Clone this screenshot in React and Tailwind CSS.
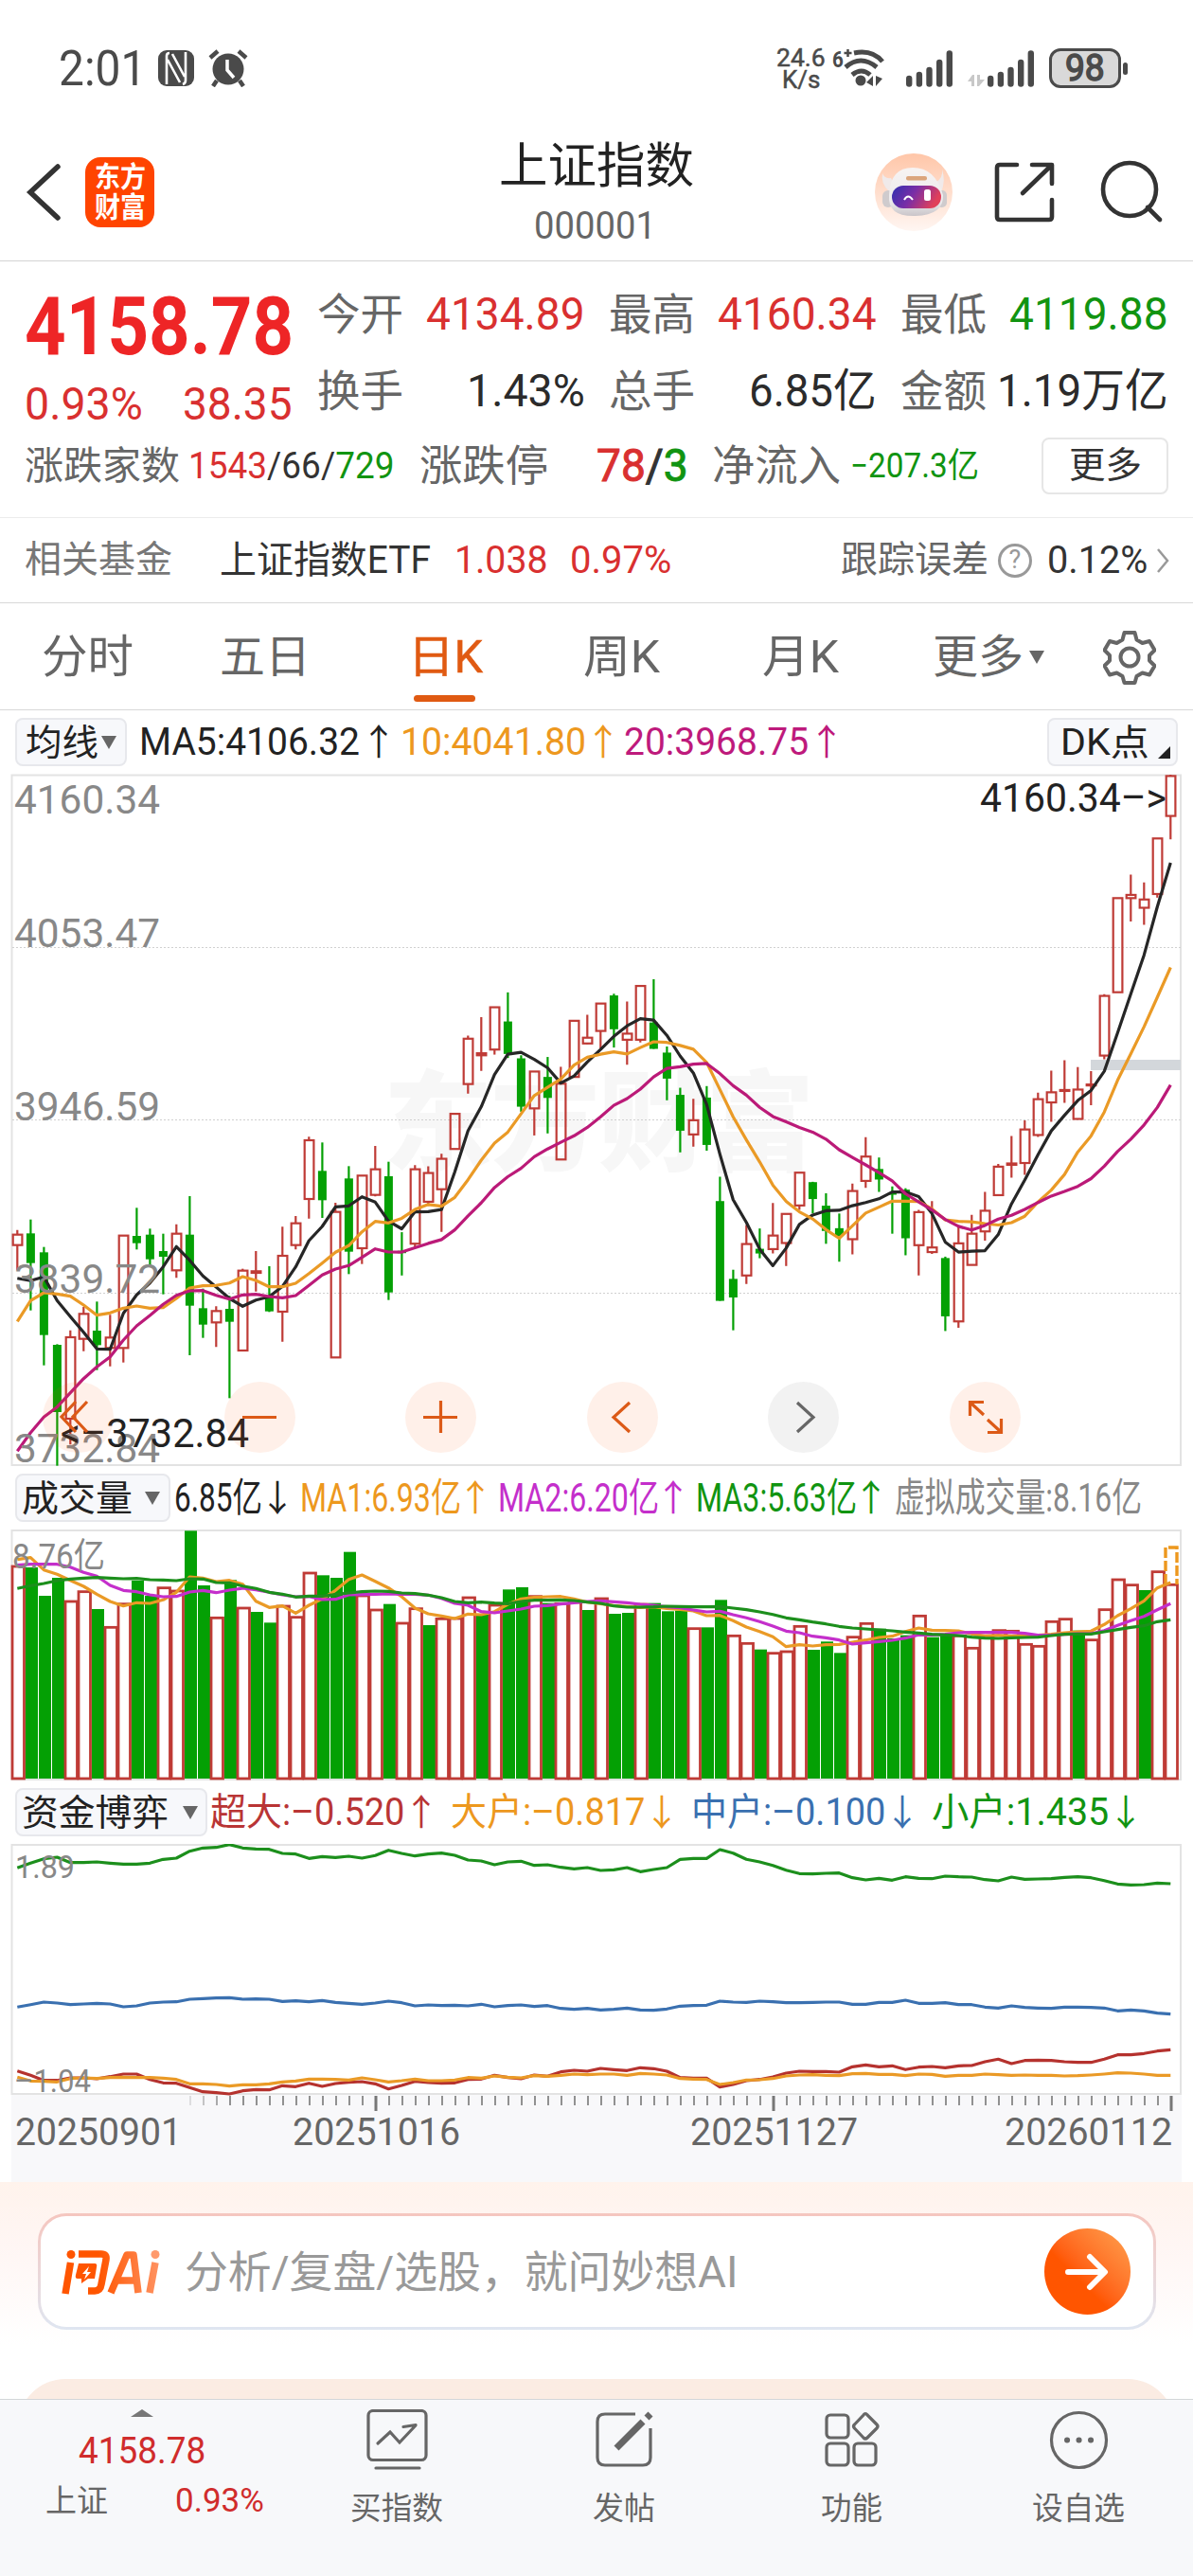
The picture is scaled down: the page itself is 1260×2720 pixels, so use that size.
import { useLayoutEffect, useRef, useState } from "react";
import clsx from "clsx";

// squeezes or stretches a single line of text to the width of its box
function Fit({ className, children }) {
  const boxRef = useRef(null);
  const textRef = useRef(null);
  const [scale, setScale] = useState(1);

  useLayoutEffect(() => {
    setScale(boxRef.current.clientWidth / textRef.current.offsetWidth);
  }, [children]);

  return (
    <span ref={boxRef} className={clsx("block shrink-0 leading-none", className)}>
      <span
        ref={textRef}
        className="inline-block origin-left whitespace-pre align-top"
        style={{ transform: `scaleX(${scale})` }}
      >
        {children}
      </span>
    </span>
  );
}

function Arrow({ down, className }) {
  return (
    <span className={clsx("block w-[40px] shrink-0 text-center text-[38px] leading-none", className)}>
      {down ? "↓" : "↑"}
    </span>
  );
}

function Caret({ className }) {
  return (
    <svg viewBox="0 0 16 14" className={clsx("h-[14px] w-4 shrink-0 fill-[#666]", className)}>
      <path d="M0 0h16L8 14z" />
    </svg>
  );
}

/* ---------- series ---------- */

const PAGES = [
  { from: 61, top: 800, unit: 2.063 },
  { from: 29, top: 1000, unit: 2.8 },
  { from: 0, top: 1040, unit: 3 },
];

const priceY = (v, i) => {
  const page = PAGES.find((p) => i >= p.from);
  return page.top + v / page.unit;
};
const volumeY = (v) => 1540 + v / 3;
const flowY = (v) => 1880 + v / 3;
const dayX = (i) => 18.3 + 14 * i;

const RED = "#bf3b36";
const GREEN = "#04a004";

// high, body top, body bottom, low
const candles = [
  [776, 791, 824, 904], [743, 787, 881, 1031], [830, 847, 1109, 1205], [1138, 1140, 1353, 1523],
  [1094, 1116, 1374, 1456], [1020, 1042, 1121, 1160], [1003, 1095, 1141, 1220], [1045, 1117, 1150, 1208],
  [794, 794, 1150, 1196], [706, 795, 818, 838], [772, 791, 869, 890], [788, 843, 861, 980],
  [758, 788, 904, 928], [669, 791, 1016, 1173], [962, 1024, 1076, 1118], [1018, 1033, 1069, 1147],
  [985, 1026, 1067, 1309], [899, 905, 1158, 1158], [843, 907, 912, 971], [891, 985, 1034, 1036],
  [766, 858, 1035, 1130], [732, 755, 824, 838], [481, 492, 678, 740], [499, 589, 682, 738],
  [690, 719, 1180, 1180], [574, 613, 845, 916], [604, 604, 834, 884], [510, 584, 665, 670],
  [560, 606, 974, 998], [843, 898, 905, 971], [645, 657, 877, 890], [648, 668, 753, 765],
  [611, 626, 716, 842], [493, 493, 597, 597], [262, 271, 405, 433], [207, 314, 320, 366],
  [178, 178, 303, 318], [134, 220, 316, 328], [320, 329, 472, 487], [368, 368, 477, 557],
  [325, 384, 446, 551], [354, 404, 628, 628], [218, 218, 384, 384], [200, 268, 285, 287],
  [167, 167, 248, 300], [138, 143, 243, 297], [161, 256, 274, 348], [115, 115, 274, 282],
  [95, 223, 301, 301], [294, 312, 389, 453], [416, 437, 543, 607], [449, 512, 554, 590],
  [411, 445, 585, 602], [679, 751, 1046, 1046], [954, 981, 1036, 1133], [822, 878, 971, 996],
  [832, 892, 906, 920], [757, 853, 893, 906], [789, 789, 875, 943], [667, 667, 764, 777],
  [694, 695, 745, 787], [949, 976, 1031, 1059], [993, 1025, 1042, 1098], [928, 944, 1049, 1082],
  [827, 869, 922, 937], [871, 896, 919, 946], [934, 948, 950, 1037], [938, 941, 1047, 1084],
  [985, 990, 1062, 1128], [966, 1067, 1077, 1081], [1087, 1090, 1217, 1249], [1020, 1058, 1228, 1242],
  [996, 1037, 1105, 1106], [946, 987, 1032, 1052], [885, 891, 953, 953], [824, 884, 887, 915],
  [790, 810, 883, 909], [730, 744, 822, 826], [682, 729, 751, 793], [659, 724, 726, 752],
  [674, 723, 787, 787], [683, 712, 714, 757], [515, 519, 649, 657], [306, 306, 511, 511],
  [255, 299, 306, 357], [272, 309, 327, 364], [176, 176, 297, 305], [37, 40, 127, 178],
];
const candleColors =
  "rgggrrgrrg" + "ggrggrgrrg" + "rrrgrgrrgg" + "rrrrrrrggr" + "grrrrgrrgg" + "grgggrgrrr" + "gggrrgggrr" + "grrrrrrrrr" + "rrrrrrrr";

const ma5 = [
  929, 937, 925, 1000, 1051, 1100, 1153, 1154, 1040, 982, 944, 893, 829, 872, 922, 957, 993, 1018, 998, 988, 955, 893,
  810, 765, 703, 700, 671, 688, 748, 833, 783, 782, 776, 665, 543, 472, 377, 317, 311, 332, 357, 402, 381, 340, 303, 264,
  233, 212, 216, 261, 322, 372, 465, 612, 747, 814, 893, 942, 890, 820, 792, 987, 986, 976, 969, 961, 946, 946, 956, 993,
  1055, 1077, 1075, 1074, 1039, 972, 920, 865, 813, 779, 747, 725, 683, 600, 515, 430, 325, 229,
];
const ma10 = [
  1066, 1000, 975, 979, 986, 1014, 1046, 1039, 1024, 1017, 1024, 1022, 993, 960, 953, 952, 944, 924, 936, 956, 956, 945,
  914, 881, 847, 826, 782, 749, 754, 802, 776, 761, 766, 740, 688, 630, 580, 547, 493, 439, 415, 390, 349, 326, 317, 310,
  316, 297, 280, 282, 291, 302, 341, 421, 502, 570, 635, 704, 752, 783, 804, 1028, 1047, 1020, 992, 979, 966, 966, 967,
  983, 1007, 1010, 1011, 1015, 1018, 1013, 999, 968, 942, 908, 859, 824, 772, 703, 645, 586, 522, 457,
];
const ma20 = [
  1477, 1418, 1369, 1337, 1292, 1247, 1210, 1178, 1125, 1080, 1047, 1012, 983, 969, 968, 983, 995, 982, 980, 987, 991,
  984, 952, 919, 900, 889, 863, 836, 846, 902, 889, 876, 865, 836, 795, 756, 711, 679, 654, 620, 597, 577, 558, 533, 502,
  468, 448, 420, 384, 359, 354, 346, 344, 374, 410, 438, 474, 501, 517, 533, 547, 831, 854, 871, 887, 904, 922, 950, 968,
  985, 1006, 1021, 1029, 1019, 1005, 997, 984, 969, 955, 945, 934, 917, 890, 858, 831, 800, 762, 713,
];

const volumes = [
  342, 345, 435, 378, 453, 422, 477, 535, 461, 387, 435, 410, 420, 229, 402, 505, 385, 474, 486, 520, 468, 503, 363, 370,
  378, 296, 435, 480, 461, 522, 476, 528, 508, 507, 441, 495, 465, 415, 408, 437, 458, 460, 456, 480, 444, 492, 489, 462,
  458, 484, 482, 539, 535, 448, 562, 586, 605, 617, 612, 532, 606, 580, 616, 566, 523, 539, 570, 560, 499, 566, 558, 562,
  601, 562, 545, 547, 589, 595, 517, 509, 545, 575, 479, 384, 401, 417, 359, 400,
];
const volumeColors =
  "rgggrrgrrg" + "grrggrgrgg" + "rrrgggrrgr" + "rgrrrgrggr" + "grrgrggrgg" + "grggrrgrrr" + "gggrrgggrg" + "grrrrrrrrr" + "grrrrgrr";

const volMa1 = [
  320, 314, 353, 367, 386, 405, 430, 453, 467, 457, 459, 448, 424, 375, 379, 390, 386, 398, 452, 472, 467, 490, 465, 445,
  418, 383, 369, 389, 410, 438, 474, 492, 499, 507, 493, 495, 485, 462, 445, 440, 438, 437, 445, 455, 460, 466, 469, 472,
  470, 475, 478, 483, 498, 497, 514, 534, 548, 565, 596, 590, 594, 590, 589, 582, 575, 567, 563, 548, 537, 544, 545, 546,
  556, 562, 560, 562, 560, 560, 557, 552, 549, 547, 526, 498, 476, 451, 410, 393,
];
const volMa2 = [
  338, 335, 335, 335, 344, 361, 373, 402, 418, 422, 432, 438, 437, 423, 418, 425, 417, 411, 416, 424, 432, 438, 437, 447,
  446, 432, 431, 430, 429, 430, 430, 433, 443, 459, 465, 485, 489, 483, 477, 468, 466, 461, 457, 453, 451, 454, 457, 462,
  465, 470, 473, 480, 486, 484, 495, 505, 517, 531, 547, 552, 563, 568, 575, 588, 584, 580, 576, 569, 559, 559, 557, 552,
  551, 551, 551, 551, 554, 560, 560, 557, 555, 555, 545, 529, 514, 500, 479, 460,
];
const volMa3 = [
  412, 403, 396, 387, 382, 379, 377, 379, 381, 380, 384, 385, 387, 381, 382, 393, 394, 404, 412, 424, 430, 439, 436, 436,
  431, 426, 422, 420, 421, 426, 428, 433, 441, 453, 457, 455, 458, 460, 453, 449, 449, 448, 450, 455, 459, 467, 471, 471,
  470, 468, 469, 470, 470, 469, 474, 479, 486, 494, 505, 511, 518, 524, 532, 537, 540, 543, 546, 550, 553, 557, 559, 561,
  566, 569, 570, 568, 567, 566, 561, 557, 556, 556, 549, 542, 535, 530, 517, 511,
];

const flowSmall = [
  277, 262, 248, 243, 260, 260, 258, 262, 265, 265, 262, 250, 246, 224, 214, 212, 203, 214, 217, 218, 231, 233, 247, 241,
  244, 240, 246, 238, 221, 231, 239, 233, 230, 237, 252, 255, 267, 258, 256, 269, 267, 275, 280, 276, 285, 283, 276, 289,
  282, 276, 250, 247, 247, 219, 230, 250, 258, 269, 284, 295, 296, 294, 293, 308, 315, 310, 316, 305, 310, 311, 303, 305,
  306, 314, 318, 306, 313, 312, 311, 307, 305, 308, 317, 328, 331, 330, 325, 327,
];
const flowMiddle = [
  718, 710, 702, 705, 710, 708, 706, 708, 717, 714, 705, 702, 701, 693, 691, 689, 688, 693, 692, 693, 700, 698, 701, 697,
  703, 706, 709, 705, 699, 704, 714, 711, 713, 712, 714, 709, 717, 713, 711, 716, 713, 722, 725, 722, 727, 725, 721, 727,
  728, 724, 715, 713, 712, 699, 702, 703, 699, 701, 704, 704, 703, 702, 702, 709, 709, 703, 703, 696, 706, 706, 704, 710,
  710, 718, 721, 714, 719, 721, 722, 718, 718, 719, 721, 730, 727, 730, 737, 740,
];
const flowHuge = [
  920, 934, 950, 950, 942, 942, 945, 938, 930, 930, 947, 958, 959, 973, 986, 989, 993, 983, 979, 980, 967, 970, 959, 969,
  960, 956, 954, 961, 977, 966, 953, 957, 959, 958, 947, 946, 934, 941, 945, 933, 937, 923, 918, 921, 912, 916, 919, 910,
  913, 921, 941, 943, 943, 971, 963, 951, 947, 939, 927, 921, 922, 922, 924, 907, 901, 907, 904, 916, 908, 906, 910, 904,
  903, 891, 883, 897, 887, 886, 887, 891, 893, 893, 883, 869, 869, 865, 857, 853,
];
const flowLarge = [
  940, 952, 953, 955, 944, 942, 944, 941, 940, 941, 941, 943, 947, 961, 961, 963, 968, 964, 964, 961, 955, 952, 946, 946,
  947, 949, 942, 948, 955, 951, 946, 951, 951, 949, 941, 943, 936, 940, 942, 935, 937, 934, 930, 932, 930, 930, 934, 928,
  930, 933, 944, 946, 947, 963, 957, 949, 948, 944, 936, 933, 932, 934, 935, 929, 928, 931, 931, 935, 930, 931, 937, 934,
  934, 930, 932, 934, 933, 934, 934, 936, 935, 933, 930, 926, 927, 930, 934, 934,
];

function Line({ data, y, color, width = 3.2 }) {
  const points = data.map((v, i) => `${dayX(i)},${y(v, i).toFixed(1)}`).join(" ");
  return <polyline points={points} fill="none" stroke={color} strokeWidth={width} strokeLinejoin="round" />;
}

function Label({ x, y, w, size = 42, fill = "#888", children }) {
  return (
    <text x={x} y={y} fontSize={size} fill={fill} textLength={w} lengthAdjust="spacingAndGlyphs">
      {children}
    </text>
  );
}

/* ---------- top of the page ---------- */

function SignalBars() {
  return (
    <svg viewBox="0 0 49 39" className="h-[39px] w-[49px] shrink-0 stroke-[#4a4a4a]" strokeWidth="6.4" strokeLinecap="round">
      <path d="M3.2 30v5.500M13.900 26v9.500M24.500 21v14.500M35.200 13v22.500M45.800 3.500v32" />
    </svg>
  );
}

function StatusBar() {
  return (
    <div className="flex h-[130px] items-center pt-[14px] pl-[62px] text-[#4a4a4a]">
      <Fit className="w-[92px] text-[51px]">2:01</Fit>
      <svg viewBox="0 0 38 38" className="ml-[13px] h-[38px] w-[38px]">
        <rect width="38" height="38" rx="9" fill="#4a4a4a" />
        <path d="M9 36V6q0-3 3-3M10 10l13 24M29 2v30q0 3-3 4M28 28L15 4" fill="none" stroke="#fff" strokeWidth="2.600" />
      </svg>
      <svg viewBox="0 0 42 40" className="ml-[15px] h-[40px] w-[42px]">
        <circle cx="21" cy="21" r="16.500" fill="#4a4a4a" />
        <path d="M2 9l8-7M32 2l8 7M9 33l-4 6M33 33l4 6" stroke="#4a4a4a" strokeWidth="4.500" />
        <path d="M20 11v11l7 8" fill="none" stroke="#fff" strokeWidth="3.500" />
      </svg>
      <div className="ml-[557px] flex w-[54px] flex-col items-center">
        <Fit className="w-[52px] text-[26px] [-webkit-text-stroke:0.5px]">24.6</Fit>
        <Fit className="-mt-[3px] w-[40px] text-[26px] [-webkit-text-stroke:0.5px]">K/s</Fit>
      </div>
      <div className="ml-[6px] flex">
        <Fit className="w-[12px] text-[24px] font-bold">6</Fit>
        <svg viewBox="12 0 44 42" className="h-[42px] w-[44px] -translate-y-px" fill="none" stroke="#4a4a4a" strokeWidth="5">
          <path d="M23 6q19-4 30 9M14 21q16-14 33 0M21 29q10-8 19 0" />
          <circle cx="30" cy="35" r="5.500" fill="#4a4a4a" stroke="none" />
          <path d="M43 30v11l-7-4zM46 30v11l7-8z" fill="#4a4a4a" stroke="none" />
          <path d="M12.500 6h8M16.500 2v8" strokeWidth="2.500" />
        </svg>
      </div>
      <span className="ml-[22px]">
        <SignalBars />
      </span>
      <svg viewBox="0 0 18 12" className="mt-[26px] ml-[16px] h-3 w-[18px] fill-[#c8c8c8]">
        <path d="M0 7l5-7h2v12H4V7zM10 0h3v5h5l-6 7h-2z" />
      </svg>
      <span className="ml-[3px]">
        <SignalBars />
      </span>
      <div className="ml-[16px] flex h-[42px] w-[76px] shrink-0 items-center justify-center rounded-[12px] border-[3.5px] border-[#4a4a4a] bg-[#d9d9d9]">
        <Fit className="w-[42px] text-[38px] [-webkit-text-stroke:1.5px]">98</Fit>
      </div>
      <div className="ml-[2px] h-[13px] w-[5px] rounded-full bg-[#4a4a4a]" />
    </div>
  );
}

function Robot() {
  return (
    <svg viewBox="0 0 82 82" className="size-[82px]">
      <defs>
        <linearGradient id="halo" x2="0" y2="1">
          <stop offset="0" stopColor="#ffc6a8" />
          <stop offset="1" stopColor="#fff6f2" />
        </linearGradient>
        <linearGradient id="visor" x2="1" y2=".3">
          <stop offset="0" stopColor="#2f2fb0" />
          <stop offset=".5" stopColor="#7a2ea6" />
          <stop offset="1" stopColor="#e0405a" />
        </linearGradient>
        <linearGradient id="shell" x2="0" y2="1">
          <stop offset="0" stopColor="#f7f3f2" />
          <stop offset=".7" stopColor="#eceaec" />
          <stop offset="1" stopColor="#c9c5c9" />
        </linearGradient>
      </defs>
      <circle cx="41" cy="41" r="41" fill="url(#halo)" />
      <path d="M8 21q2 6 9 5l4 8-6 6q-9-8-7-19zM71 17q1 9-6 13l-3 9 8 2q5-12 1-24z" fill="#f0eaea" />
      <rect x="8" y="39" width="12" height="18" rx="6" fill="#cfcbcd" />
      <rect x="65" y="39" width="11" height="18" rx="5" fill="#cfcbcd" />
      <path d="M15 44Q16 15 40 15T72 44q1 21-29 22T15 44z" fill="url(#shell)" />
      <rect x="33" y="24" width="22" height="4.500" rx="2" fill="#dba57c" />
      <rect x="18" y="34" width="52" height="24" rx="12" fill="url(#visor)" />
      <path d="M31 49q4-7 9 0" fill="none" stroke="#fff" strokeWidth="2" />
      <rect x="52" y="38" width="7" height="12" rx="2.500" fill="#fff" />
    </svg>
  );
}

function Header() {
  return (
    <div className="grid h-[146px] grid-cols-[1fr_auto_1fr] items-center border-b border-[#d4d4d4]">
      <div className="flex items-center pl-[27px]">
        <svg viewBox="0 0 38 62" className="h-[62px] w-[38px]" fill="none" stroke="#333" strokeWidth="5.500" strokeLinecap="round">
          <path d="M34 4L5 31l29 27" />
        </svg>
        <div className="ml-[25px] flex h-[74px] w-[73px] flex-col items-center justify-center gap-[2px] rounded-[16px] bg-[#ff4400] text-[30px] font-bold text-white">
          <Fit className="w-[54px]">东方</Fit>
          <Fit className="w-[54px]">财富</Fit>
        </div>
      </div>
      <div className="flex flex-col items-center gap-[18px] pt-[4px]">
        <Fit className="w-[206px] text-[51px] text-[#222]">上证指数</Fit>
        <Fit className="mr-[4px] w-[129px] text-[40px] text-[#666]">000001</Fit>
      </div>
      <div className="flex items-center justify-end pr-[34px]">
        <Robot />
        <svg viewBox="0 0 64 64" className="ml-[44px] size-[64px]" fill="none" stroke="#333" strokeWidth="4.600" strokeLinecap="round" strokeLinejoin="round">
          <path d="M24 3H6Q3 3 3 6v52q0 3 3 3h52q3 0 3-3V40M40 3h21v20M60 4L30 33" />
        </svg>
        <svg viewBox="0 0 64 64" className="ml-[48px] size-[64px] overflow-visible" fill="none" stroke="#333" strokeWidth="4.600" strokeLinecap="round">
          <circle cx="31" cy="29" r="28" />
          <path d="M50 48l13 13" />
        </svg>
      </div>
    </div>
  );
}

function Stat({ label, value, valueClass }) {
  return (
    <div className="flex h-12 w-[283px] items-center justify-between">
      <Fit className="w-[91px] text-[46px] text-[#666]">{label}</Fit>
      <Fit className={clsx("text-[48px]", valueClass)}>{value}</Fit>
    </div>
  );
}

function Quote() {
  return (
    <div className="h-[271px] border-b border-[#ececec]">
      <div className="flex h-[174px]">
        <div className="w-[335px] pt-[27px] pl-[26px]">
          <Fit className="w-[284px] text-[85px] font-bold text-[#ee2526]">4158.78</Fit>
          <div className="mt-[15px] flex h-12 items-center gap-[42px] text-[48px] text-[#d93030]">
            <Fit className="w-[125px]">0.93%</Fit>
            <Fit className="w-[116px]">38.35</Fit>
          </div>
        </div>
        <div className="grid grid-cols-3 content-start gap-x-[25px] gap-y-[33px] pt-[32px]">
          <Stat label="今开" value="4134.89" valueClass="w-[168px] text-[#d93030]" />
          <Stat label="最高" value="4160.34" valueClass="w-[168px] text-[#d93030]" />
          <Stat label="最低" value="4119.88" valueClass="w-[168px] text-[#119411]" />
          <Stat label="换手" value="1.43%" valueClass="w-[125px] text-[#2b2b2b]" />
          <Stat label="总手" value="6.85亿" valueClass="w-[135px] text-[#2b2b2b]" />
          <Stat label="金额" value="1.19万亿" valueClass="w-[181px] text-[#2b2b2b]" />
        </div>
      </div>
      <div className="mt-3 flex h-[60px] items-center pl-[26px] text-[#666]">
        <Fit className="w-[164px] text-[41px]">涨跌家数</Fit>
        <Fit className="ml-[9px] w-[217px] text-[39px] text-[#333]">
          <span className="text-[#d93030]">1543</span>/66/<span className="text-[#119411]">729</span>
        </Fit>
        <Fit className="ml-[27px] w-[136px] text-[45px]">涨跌停</Fit>
        <Fit className="ml-[51px] w-[97px] text-[48px] text-[#333] [-webkit-text-stroke:1px]">
          <span className="text-[#d93030]">78</span>/<span className="text-[#119411]">3</span>
        </Fit>
        <Fit className="ml-[25px] w-[136px] text-[45px]">净流入</Fit>
        <Fit className="ml-[10px] w-[136px] text-[36px] text-[#119411]">−207.3亿</Fit>
        <div className="ml-[66px] flex h-[60px] w-[134px] items-center justify-center rounded-[8px] border-2 border-[#e6e6e6]">
          <Fit className="-mt-[3px] w-[77px] text-[38px] text-[#333]">更多</Fit>
        </div>
      </div>
    </div>
  );
}

function Funds() {
  return (
    <div className="flex h-[90px] items-center border-b border-[#d8d8d8] pl-[26px] text-[40px] text-[#333]">
      <Fit className="w-[156px] text-[39px] text-[#777]">相关基金</Fit>
      <Fit className="ml-[50px] w-[223px]">上证指数ETF</Fit>
      <Fit className="ml-[25px] w-[98px] text-[#d93030]">1.038</Fit>
      <Fit className="ml-[24px] w-[107px] text-[#d93030]">0.97%</Fit>
      <Fit className="ml-[179px] w-[156px] text-[39px] text-[#666]">跟踪误差</Fit>
      <div className="ml-[10px] flex size-[36px] items-center justify-center rounded-full border-[3px] border-[#999] text-[27px] leading-none text-[#999]">
        ?
      </div>
      <Fit className="ml-[16px] w-[106px]">0.12%</Fit>
      <svg viewBox="0 0 14 28" className="ml-[9px] h-[28px] w-[14px]" fill="none" stroke="#999" strokeWidth="2.500">
        <path d="M2 2l10 12L2 26" />
      </svg>
    </div>
  );
}

function Tabs() {
  return (
    <div className="flex h-[113px] items-center border-b border-[#d8d8d8] pt-[2px] pl-[44px] text-[48px] text-[#666]">
      <Fit className="w-[97px]">分时</Fit>
      <Fit className="ml-[91px] w-[96px]">五日</Fit>
      <div className="relative ml-[103px] text-[#e05a12]">
        <Fit className="w-[79px] [-webkit-text-stroke:0.5px]">日K</Fit>
        <div className="absolute -bottom-[23px] left-[6px] h-[7px] w-[65px] rounded-full bg-[#e05a12]" />
      </div>
      <Fit className="ml-[106px] w-[81px]">周K</Fit>
      <Fit className="ml-[108px] w-[81px]">月K</Fit>
      <Fit className="ml-[99px] w-[96px]">更多</Fit>
      <Caret className="ml-[6px]" />
      <svg viewBox="0 0 56 58" className="ml-[62px] h-[58px] w-[56px]" fill="none" stroke="#666" strokeWidth="4" strokeLinejoin="round">
        <path d="M22.500 3h11l2 7.500 6 3.500 7.500-2 5.500 9.500-5.500 5.500v5.500l5.500 5.500-5.500 9.500-7.500-2-6 3.500-2 7h-11l-2-7-6-3.500-7.500 2L1.500 38 7 32.500V27l-5.500-5.500L7 12l7.500 2 6-3.500z" />
        <circle cx="28" cy="29" r="9.500" />
      </svg>
    </div>
  );
}

/* ---------- charts ---------- */

function Pill({ className, children }) {
  return (
    <div className={clsx("flex h-[51px] shrink-0 items-center rounded-[8px] border-2 border-[#e7e8ec] bg-[#f7f8fb] text-[38px] text-[#222]", className)}>
      {children}
    </div>
  );
}

function PriceHeader() {
  return (
    <div className="flex h-[67px] items-center pl-[16px] text-[40px]">
      <Pill className="w-[118px] pl-[9px]">
        <Fit className="w-[77px]">均线</Fit>
        <Caret className="ml-[3px]" />
      </Pill>
      <Fit className="ml-[13px] w-[233px] text-[#222]">MA5:4106.32</Fit>
      <Arrow className="text-[#222]" />
      <Fit className="ml-[3px] w-[196px] text-[#ed981e]">10:4041.80</Fit>
      <Arrow className="-ml-[2px] text-[#ed981e]" />
      <Fit className="ml-[2px] w-[195px] text-[#be1a7c]">20:3968.75</Fit>
      <Arrow className="-ml-px text-[#be1a7c]" />
      <Pill className="ml-[213px] w-[138px] pl-[12px]">
        <Fit className="w-[94px]">DK点</Fit>
        <svg viewBox="0 0 13 13" className="mt-[22px] ml-[9px] size-[13px] fill-[#222]">
          <path d="M13 0v13H0z" />
        </svg>
      </Pill>
    </div>
  );
}

const controls = [
  { name: "fast back", d: "M35 21L20 37l15 16M47 21L32 37l15 16" },
  { name: "zoom out", d: "M19 37.500h36" },
  { name: "zoom in", d: "M19 37.500h36M37.500 20v34" },
  { name: "back", d: "M45 22L28 37.500 45 53" },
  { name: "forward", d: "M31 22l17 15.500L31 53", muted: true },
  { name: "full screen", d: "M36 21.500H21.500V36M23 23l13 12M40 53.500h14.500V39M53 52L40 40" },
];

function PriceChart() {
  return (
    <div className="relative h-[731px]">
      <svg viewBox="0 817 1260 731" className="block h-[731px] w-[1260px]">
        <text x="405" y="1227" fontSize="115" fontWeight="900" fill="#f7f7f7" textLength="455">
          东方财富
        </text>
        <rect x="12.500" y="818.500" width="1234.500" height="728.500" fill="none" stroke="#e3e3e3" strokeWidth="2" />
        {[1000.5, 1182.5, 1365.5].map((y) => (
          <path key={y} d={`M13 ${y}H1247`} stroke="#d0d0d0" strokeDasharray="2 2" />
        ))}
        <rect x="1152" y="1119" width="95" height="11" fill="#d3d7db" />
        {candles.map((c, i) => {
          const [high, top, bottom, low] = c.map((v) => priceY(v, i));
          const x = dayX(i);
          if (candleColors[i] === "g") {
            return (
              <g key={i} fill={GREEN}>
                <rect x={x - 1} y={high} width="2.200" height={low - high} />
                <rect x={x - 4.4} y={top} width="9" height={Math.max(bottom - top, 2)} />
              </g>
            );
          }
          return (
            <g key={i} fill="none" stroke={RED} strokeWidth="2.200">
              <path d={`M${x} ${high}V${top}M${x} ${bottom}V${low}`} />
              <rect x={x - 4.6} y={top} width="9.700" height={Math.max(bottom - top, 1)} />
            </g>
          );
        })}
        <Line data={ma5} y={priceY} color="#262626" />
        <Line data={ma10} y={priceY} color="#ea9a26" />
        <Line data={ma20} y={priceY} color="#bb1a78" />
        <Label x={15} y={859} w={154}>4160.34</Label>
        <Label x={15} y={1000} w={154}>4053.47</Label>
        <Label x={15} y={1183} w={154}>3946.59</Label>
        <Label x={15} y={1365} w={154}>3839.72</Label>
        <Label x={15} y={1544} w={154}>3732.84</Label>
        <Label x={1035} y={857} w={197} fill="#222">{"4160.34–>"}</Label>
        <Label x={64} y={1528} w={199} fill="#222">{"<–3732.84"}</Label>
      </svg>
      <div className="absolute bottom-[14px] left-[45px] flex gap-[116.500px]">
        {controls.map(({ name, d, muted }) => (
          <button
            key={name}
            aria-label={name}
            className={clsx("size-[75px] rounded-full", muted ? "bg-[#808080]/10" : "bg-[#ff5a10]/9")}
          >
            <svg viewBox="0 0 75 75" fill="none" stroke={muted ? "#666" : "#dc5a17"} strokeWidth="3.200">
              <path d={d} />
            </svg>
          </button>
        ))}
      </div>
    </div>
  );
}

function VolumeHeader() {
  return (
    <div className="flex h-[67px] items-center pl-[16px] text-[42px]">
      <Pill className="w-[164px] pl-[5px]">
        <Fit className="w-[117px]">成交量</Fit>
        <Caret className="ml-[13px]" />
      </Pill>
      <Fit className="ml-[4px] w-[93px] text-[#222]">6.85亿</Fit>
      <Arrow down className="-ml-[4px] text-[#222]" />
      <Fit className="ml-[4px] w-[170px] text-[#ed981e]">MA1:6.93亿</Fit>
      <Arrow className="-ml-[5px] text-[#ed981e]" />
      <Fit className="ml-[4px] w-[170px] text-[#c42fcb]">MA2:6.20亿</Fit>
      <Arrow className="-ml-[5px] text-[#c42fcb]" />
      <Fit className="ml-[4px] w-[170px] text-[#119411]">MA3:5.63亿</Fit>
      <Arrow className="-ml-[5px] text-[#119411]" />
      <Fit className="ml-[5px] w-[261px] text-[#888]">虚拟成交量:8.16亿</Fit>
    </div>
  );
}

function VolumeChart() {
  return (
    <svg viewBox="0 1615 1260 265" className="block h-[265px] w-[1260px]">
      <rect x="12.500" y="1616" width="1234.500" height="263" fill="none" stroke="#e3e3e3" strokeWidth="2" />
      {volumes.map((v, i) => {
        const x = dayX(i);
        const y = volumeY(v);
        return volumeColors[i] === "g" ? (
          <rect key={i} x={x - 5.3} y={y} width="13" height={1878 - y} fill={GREEN} />
        ) : (
          <rect key={i} x={x - 5.3} y={y} width="12.500" height={1878 - y} fill="#fff" stroke={RED} strokeWidth="2.800" />
        );
      })}
      <path d="M1231 1673V1634h12v39" fill="none" stroke="#ed981e" strokeWidth="3.400" strokeDasharray="11 3" />
      <Line data={volMa1} y={volumeY} color="#ea9a26" />
      <Line data={volMa2} y={volumeY} color="#c42fcb" />
      <Line data={volMa3} y={volumeY} color="#1c8f1c" />
      <Label x={13} y={1656} w={98} size={37}>8.76亿</Label>
    </svg>
  );
}

function FlowHeader() {
  return (
    <div className="flex h-[67px] items-center pl-[16px] text-[40px]">
      <Pill className="w-[203px] pl-[5px]">
        <Fit className="w-[155px]">资金博弈</Fit>
        <Caret className="ml-[15px]" />
      </Pill>
      <Fit className="ml-[3px] w-[205px] text-[#b93535]">超大:–0.520</Fit>
      <Arrow className="-ml-[2px] text-[#b93535]" />
      <Fit className="ml-[11px] w-[205px] text-[#ed981e]">大户:–0.817</Fit>
      <Arrow down className="-ml-[2px] text-[#ed981e]" />
      <Fit className="ml-[11px] w-[205px] text-[#3a70b0]">中户:–0.100</Fit>
      <Arrow down className="-ml-[2px] text-[#3a70b0]" />
      <Fit className="ml-[11px] w-[187px] text-[#119411]">小户:1.435</Fit>
      <Arrow down className="-ml-[2px] text-[#119411]" />
    </div>
  );
}

function FlowChart() {
  return (
    <svg viewBox="0 1947 1260 357" className="block h-[357px] w-[1260px]">
      <rect x="12" y="2212" width="1236" height="92" fill="#f8f8fa" />
      <rect x="12.500" y="1948" width="1234.500" height="263" fill="#fff" stroke="#e3e3e3" strokeWidth="2" />
      <Line data={flowSmall} y={flowY} color="#1c8f1c" />
      <Line data={flowMiddle} y={flowY} color="#3a70b0" />
      <Line data={flowHuge} y={flowY} color="#b5322e" />
      <Line data={flowLarge} y={flowY} color="#ea9a26" />
      {flowSmall.map((_, i) => {
        const major = i > 20 && i % 30 === 27;
        return (
          i > 12 && (
            <path
              key={i}
              d={`M${dayX(i) + 0.7} 2213v${major ? 16 : 10}`}
              stroke="#777"
              strokeWidth={major ? 3 : 1.6}
              opacity={Math.min(1, (i - 12) / 4)}
            />
          )
        );
      })}
      <Label x={16} y={1983} w={63} size={34}>1.89</Label>
      <Label x={15} y={2209} w={81} size={34}>–1.04</Label>
      <Label x={16} y={2265} w={176} size={40} fill="#666">20250901</Label>
      <Label x={309} y={2265} w={177} size={40} fill="#666">20251016</Label>
      <Label x={729} y={2265} w={177} size={40} fill="#666">20251127</Label>
      <Label x={1061} y={2265} w={177} size={40} fill="#666">20260112</Label>
    </svg>
  );
}

/* ---------- bottom ---------- */

function AskBar() {
  return (
    <div className="flex h-[229px] flex-col items-center overflow-hidden bg-linear-to-b from-[#fff3ec] via-[#fff6f4] via-30% to-white to-75% pt-[33px]">
      <div className="w-[1181px] rounded-[30px] bg-linear-to-b from-[#f5c6bf] to-[#dfe6f1] p-[3px]">
        <div className="flex h-[117px] items-center rounded-[27px] bg-white pl-[21px]">
          <svg viewBox="0 0 106 48" className="h-[48px] w-[106px]">
            <defs>
              <linearGradient id="ask" gradientUnits="userSpaceOnUse" x1="40" x2="106" y1="0" y2="0">
                <stop offset="0" stopColor="#ff5500" />
                <stop offset="1" stopColor="#ff9464" />
              </linearGradient>
            </defs>
            <g fill="none" stroke="url(#ask)" strokeWidth="7.500" strokeLinejoin="round">
              <path d="M10.500 14L5 47M19 5h24q6 0 5 6l-5 26q-1 7-7 7h-7" />
              <path d="M53 46L70 6h7l5 40M61 33h19" />
              <path d="M100 14l-6 32" />
            </g>
            <circle cx="11" cy="5.500" r="4.500" fill="#ff5500" />
            <circle cx="100" cy="5.500" r="4.500" fill="#ff9a6c" />
            <path d="M19 15h17q3 0 2 4l-2 12h-7l-7 5v-5h-4q-3 0-2-4z" fill="#ff5500" />
            <path d="M30 18l-7 8h4l-2 6 7-8h-4z" fill="#fff" />
          </svg>
          <Fit className="ml-[25px] w-[584px] text-[46px] text-[#999]">分析/复盘/选股，就问妙想AI</Fit>
          <div className="ml-[324px] flex size-[91px] items-center justify-center rounded-full bg-linear-to-bl from-[#ff9040] from-15% to-[#ff5500] to-60%">
            <svg viewBox="0 0 46 40" className="h-[40px] w-[46px]" fill="none" stroke="#fff" strokeWidth="6" strokeLinecap="round" strokeLinejoin="round">
              <path d="M3 20h38M26 4l16 16-16 16" />
            </svg>
          </div>
        </div>
      </div>
      <div className="mt-[52px] h-20 w-[1222px] shrink-0 rounded-t-[50px] bg-[#fbece3]" />
    </div>
  );
}

const navItems = [
  {
    label: "买指数",
    width: "w-[98px]",
    icon: (
      <>
        <rect x="2" y="1.500" width="61" height="52" rx="5" />
        <path d="M10 62h46M12 36l13-12 10 11 17-18M39 18.500l13-2" strokeLinecap="round" />
      </>
    ),
  },
  {
    label: "发帖",
    width: "w-[66px]",
    icon: (
      <>
        <path d="M44 5H12Q4 5 4 13v38q0 8 8 8h40q8 0 8-8V20" />
        <path d="M24 41L52 13" strokeWidth="7" />
        <path d="M56 9l4-4" strokeWidth="7" />
      </>
    ),
  },
  {
    label: "功能",
    width: "w-[65px]",
    icon: (
      <>
        <rect x="6" y="6" width="23" height="24" rx="4" />
        <rect x="6" y="36" width="23" height="23" rx="4" />
        <rect x="35" y="36" width="23" height="23" rx="4" />
        <path d="M47 4.500Q48 4.500 49 6l10 10q2 2 0 4L49 30q-2 2-4 0L35.500 20q-2-2 0-4L45 6q1-1.500 2-1.500z" />
      </>
    ),
  },
  {
    label: "设自选",
    width: "w-[98px]",
    icon: (
      <>
        <circle cx="32.500" cy="32.500" r="29" />
        <path d="M20 32.500h.1M32.500 32.500h.1M45 32.500h.1" strokeWidth="6" strokeLinecap="round" />
      </>
    ),
  },
];

function BottomNav() {
  return (
    <div className="flex h-[187px] border-t border-[#d3d6d8] bg-[#f7f8fa]">
      <div className="flex w-[299px] flex-col items-center text-[38px] text-[#d02c2c]">
        <svg viewBox="0 0 24 8" className="mt-[10px] h-2 w-6 fill-[#777]">
          <path d="M12 0l12 8H0z" />
        </svg>
        <Fit className="mt-[17px] ml-px w-[134px]">4158.78</Fit>
        <div className="mt-[16px] flex items-center gap-[71px] pl-[28px]">
          <Fit className="w-[66px] text-[33px] text-[#666]">上证</Fit>
          <Fit className="w-[94px] text-[35px]">0.93%</Fit>
        </div>
      </div>
      {navItems.map(({ label, width, icon }) => (
        <div key={label} className="flex w-[240px] flex-col items-center pt-[10px]">
          <svg viewBox="0 0 65 65" className="size-[65px]" fill="none" stroke="#666" strokeWidth="3.200">
            {icon}
          </svg>
          <Fit className={clsx("mt-[23px] text-[33px] text-[#666]", width)}>{label}</Fit>
        </div>
      ))}
    </div>
  );
}

function App() {
  return (
    <div className="h-[2720px] w-[1260px] overflow-hidden bg-white font-[Roboto,'Noto_Sans_CJK_SC',sans-serif]">
      <StatusBar />
      <Header />
      <Quote />
      <Funds />
      <Tabs />
      <PriceHeader />
      <PriceChart />
      <VolumeHeader />
      <VolumeChart />
      <FlowHeader />
      <FlowChart />
      <AskBar />
      <BottomNav />
    </div>
  );
}

export default App;
